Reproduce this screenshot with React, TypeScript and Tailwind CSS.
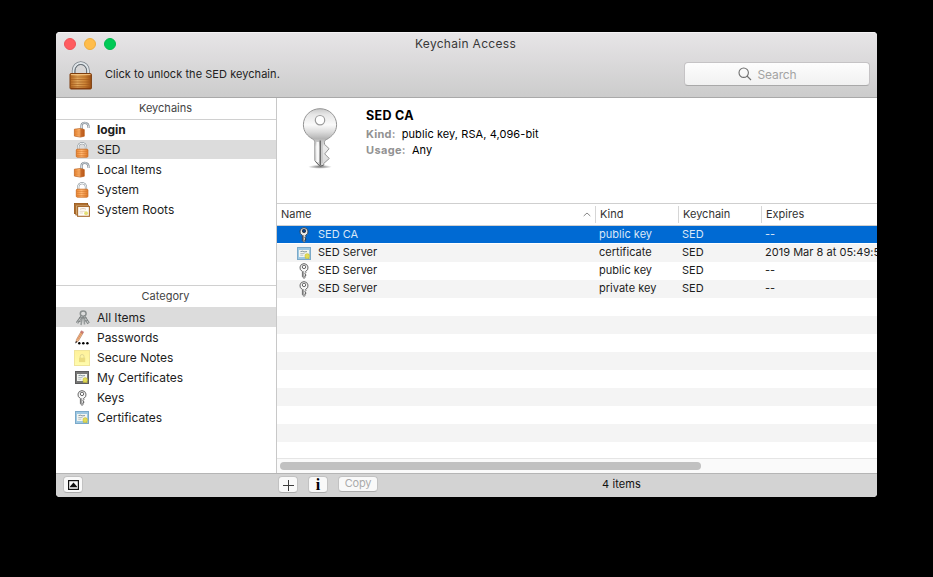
import React from "react";

function Defs() {
  return (
    <svg width="0" height="0" className="absolute">
      <defs>
        <linearGradient id="brass" x1="0" y1="0" x2="1" y2="0">
          <stop offset="0" stopColor="#b5661f" />
          <stop offset="0.35" stopColor="#dfa55a" />
          <stop offset="0.7" stopColor="#cd8435" />
          <stop offset="1" stopColor="#9a4d12" />
        </linearGradient>
        <linearGradient id="orange" x1="0" y1="0" x2="1" y2="0">
          <stop offset="0" stopColor="#ec8530" />
          <stop offset="0.45" stopColor="#ffb873" />
          <stop offset="1" stopColor="#de7726" />
        </linearGradient>
        <linearGradient id="steel" x1="0" y1="0" x2="0" y2="1">
          <stop offset="0" stopColor="#c9c9c9" />
          <stop offset="0.1" stopColor="#e6e6e6" />
          <stop offset="0.28" stopColor="#fafafa" />
          <stop offset="0.4" stopColor="#dcdcdc" />
          <stop offset="0.52" stopColor="#b4b4b4" />
          <stop offset="0.66" stopColor="#ececec" />
          <stop offset="1" stopColor="#d6d6d6" />
        </linearGradient>
        <radialGradient id="shade">
          <stop offset="0" stopColor="#000" stopOpacity="0.55" />
          <stop offset="1" stopColor="#000" stopOpacity="0" />
        </radialGradient>
        <linearGradient id="note" x1="0" y1="0" x2="0" y2="1">
          <stop offset="0" stopColor="#fff19a" />
          <stop offset="1" stopColor="#fffcae" />
        </linearGradient>
      </defs>
    </svg>
  );
}

function BigLock() {
  return (
    <svg width="24" height="29" viewBox="0 0 24 29" className="block">
      <path d="M4.6 13V9.6a7.2 7.6 0 0 1 14.4 0V13" fill="none" stroke="#7d858c" strokeWidth="3.6" />
      <path d="M4.6 13V9.6a7.2 7.6 0 0 1 14.4 0V13" fill="none" stroke="#dfe5e9" strokeWidth="2" />
      <path d="M5.9 13V9.8a5.9 6.3 0 0 1 11.8 0V13" fill="none" stroke="#59636b" strokeWidth="0.8" />
      <rect x="1" y="12.5" width="21.4" height="15.5" rx="1" fill="url(#brass)" stroke="#7d3d0e" />
      <path d="M2 13.6h19.5" stroke="#f3c483" />
      <path d="M2 16h19.5M2 18.5h19.5M2 21h19.5M2 23.5h19.5M2 25.6h19.5" stroke="#a0581c" strokeWidth="0.8" opacity="0.75" />
      <path d="M2 27.3h19.5" stroke="#7d3509" />
    </svg>
  );
}

function Lock() {
  return (
    <svg width="16" height="16" viewBox="0 0 16 16" className="block">
      <path d="M4.2 8V5.2a3.9 4 0 0 1 7.8 0V8" fill="none" stroke="#8c959b" strokeWidth="2.2" />
      <path d="M4.2 8V5.2a3.9 4 0 0 1 7.8 0V8" fill="none" stroke="#f4f7f8" strokeWidth="1.1" />
      <rect x="2.3" y="7.2" width="11.6" height="8" rx="1" fill="url(#orange)" stroke="#c9681c" strokeWidth="0.8" />
      <path d="M3 9.5h10M3 11.5h10M3 13.5h10" stroke="#d4752a" strokeWidth="0.7" opacity="0.7" />
    </svg>
  );
}

function OpenLock() {
  return (
    <svg width="16" height="16" viewBox="0 0 16 16" className="block overflow-visible">
      <path d="M8.1 8.3C6.6 3.4 7.6 0.8 10.8 0.8c2.4 0 4 1.6 3.7 5" fill="none" stroke="#818b93" strokeWidth="2.3" />
      <path d="M8.1 8.3C6.6 3.4 7.6 0.8 10.8 0.8c2.4 0 4 1.6 3.7 5" fill="none" stroke="#dfe5e9" strokeWidth="1" />
      <path d="M0.4 7.2 6.4 6.5 10.3 7.6v6.6l-3.9 0.9-6-1z" fill="url(#orange)" stroke="#b75c18" strokeWidth="0.7" />
      <path d="m6.4 6.9 3.6 0.9v6.2l-3.6 0.9z" fill="#a8480f" opacity="0.6" />
      <path d="m1 9.2 5.3-0.2M1 11h5.3M1 12.7l5.3 0.3" stroke="#d4752a" strokeWidth="0.6" />
    </svg>
  );
}

function Cert({ frame, inner }: { frame: string; inner: string }) {
  return (
    <svg width="14" height="13" viewBox="0 0 14 13" className="block">
      <rect width="14" height="13" fill={frame} />
      <rect x="0.5" y="0.5" width="13" height="12" fill="none" stroke={inner} />
      <rect x="2" y="3" width="10" height="7" fill="#f3f5f0" />
      <path d="M3.5 4.6 5.8 4.2l1.2 0.7 3-0.3" stroke="#697c86" strokeWidth="0.8" fill="none" />
      <path d="M3.3 6.5h4.2M3.3 8.2h3" stroke="#a0aab0" strokeWidth="0.7" />
      <path d="m8.8 9-1 2.8 2.4-0.6 2.2 1-0.6-3.4z" fill="#cfc534" />
      <circle cx="10.2" cy="9" r="2.4" fill="#e3dc55" stroke="#b8ae34" strokeWidth="0.4" />
    </svg>
  );
}

function Roots() {
  return (
    <svg width="16" height="14" viewBox="0 0 16 14" className="block">
      <rect x="0.5" y="0.5" width="13" height="10" fill="#c88d48" stroke="#95581e" />
      <path d="M1 11V1h12" fill="none" stroke="#b37130" />
      <rect x="1.8" y="2" width="12.8" height="10" fill="#dfb377" stroke="#925820" strokeWidth="0.7" />
      <rect x="3.6" y="3.5" width="11.8" height="9.8" fill="#fffefa" stroke="#a76a2e" strokeWidth="1.1" />
      <path d="M6 6.2c2-0.8 4-0.8 6 0" stroke="#d2b8a0" strokeWidth="0.8" fill="none" />
      <path d="M5.5 8.3h6M5.5 10h3.5" stroke="#e1ccb8" strokeWidth="0.7" />
      <circle cx="12.1" cy="10.2" r="1.9" fill="#e5df75" />
    </svg>
  );
}

function SmallKey({ light = false }: { light?: boolean }) {
  return (
    <svg width="10" height="16" viewBox="0 0 10 16" className="block">
      <path
        d="M5 0.6A4.3 4.1 0 0 0 3.4 8.4v5.4l1.6 1.6 1.4-1.2-0.7-1.2 1.5-0.9-1.4-1.3 1.1-1.1-0.3-1.3A4.3 4.1 0 0 0 5 0.6z"
        fill={light ? "#e9e9e5" : "#f7f7f7"}
        stroke={light ? "#2c3a4c" : "#606060"}
        strokeWidth="0.95"
      />
      <circle cx="5" cy="3.9" r="1.7" fill={light ? "#0b3f83" : "#fff"} stroke={light ? "#28313d" : "#555"} strokeWidth="0.9" />
      <path d="M4.7 8.2v6" stroke={light ? "#555" : "#777"} strokeWidth="0.8" />
    </svg>
  );
}

function BigKey() {
  return (
    <svg width="36" height="62" viewBox="0 0 36 62" className="block">
      <ellipse cx="18" cy="58.8" rx="12" ry="2" fill="url(#shade)" />
      <path
        d="M18 0.7C8.7 0.7 1.4 7.8 1.4 16.8c0 6.8 4 11.3 9.2 14.2 1.6 0.9 2.2 2 2.2 3.7v18l5.3 5.8 3.8-1.4-0.2-1.6 5.6-5-4.6-4.6 4.4-5.2-4.6-4.4V34.4c0-1.6 0.6-2.3 2.2-3 5.4-2.9 9.9-7.8 9.9-14.6C34.6 7.8 27.3 0.7 18 0.7z"
        fill="url(#steel)"
        stroke="#949494"
        strokeWidth="1"
      />
      <circle cx="18" cy="12.2" r="4.7" fill="#fff" stroke="#9b9b9b" strokeWidth="1.2" />
      <path d="M18.3 32.5v25" stroke="#6b6b6b" strokeWidth="1.5" />
      <path d="M20 33v22" stroke="#c4c4c4" strokeWidth="1.5" />
      <path d="M15.7 34v20" stroke="#fafafa" strokeWidth="2.4" />
      <path d="m13.5 53.5 4.6 4.8 3.3-1.1" fill="none" stroke="#666" />
    </svg>
  );
}

function KeyBunch() {
  return (
    <svg width="15" height="16" viewBox="0 0 15 16" className="block">
      <ellipse cx="8.2" cy="3.6" rx="2.9" ry="2.6" fill="none" stroke="#8a8f8f" strokeWidth="1.5" />
      <path d="M7 6 2 13M8.6 6l5 7.4" stroke="#808585" strokeWidth="2.8" />
      <path d="M7 6.2 2.4 12.8M9 6.6l4.2 6.2" stroke="#c9cdcd" strokeWidth="1.1" />
      <path d="M7.4 6.5 6 15M9 7.5l0.5 7" stroke="#969b9b" strokeWidth="1.6" />
      <path d="M4 7.9h7.8M3 11.3h2.7M10.5 11.2l2.5-1" stroke="#777c7c" strokeWidth="0.9" />
    </svg>
  );
}

function Pencil() {
  return (
    <svg width="16" height="16" viewBox="0 0 16 16" className="block">
      <path d="m2 12.3 0.4-2.7L6.6 2.3l2.3 1.1-4.5 7.5z" fill="#f5c692" stroke="#ad6f52" strokeWidth="0.6" />
      <path d="m6.6 2.2 0.8-1.4 2.2 1.1-0.7 1.4z" fill="#dd8580" stroke="#a85854" strokeWidth="0.5" />
      <path d="m3.5 9.7 4.3-7" stroke="#d97445" strokeWidth="0.7" />
      <path d="m1.1 13.4 0.9-2.4 1.4 0.9z" fill="#222" />
      <circle cx="5.3" cy="13.3" r="1.2" />
      <circle cx="9.3" cy="13.3" r="1.25" />
      <circle cx="13.4" cy="13.3" r="1.25" />
    </svg>
  );
}

function Note() {
  return (
    <svg width="16" height="16" viewBox="0 0 16 16" className="block">
      <rect x="0.5" y="0.5" width="15" height="15" fill="url(#note)" stroke="#f0e49a" />
      <path d="M6.2 8V6.4a1.9 1.9 0 0 1 3.8 0V8" fill="none" stroke="#e0d795" strokeWidth="1" />
      <rect x="5" y="7.7" width="6.2" height="4.4" fill="#ebdc80" />
    </svg>
  );
}

function SideRow({ icon, label, selected, className = "" }: { icon: React.ReactNode; label: string; selected?: boolean; className?: string }) {
  return (
    <div className="h-5">
      <div className={`flex h-[19px] items-center pl-[17px] ${selected ? "bg-[#dcdcdc]" : ""}`}>
        <span className="flex h-4 w-[18px] shrink-0 items-center justify-center">{icon}</span>
        <span className={`ml-[6px] whitespace-nowrap text-[12px] leading-[19px] tracking-[-0.03px] text-[#1d1d1d] ${className}`}>{label}</span>
      </div>
    </div>
  );
}

const rows = [
  { icon: <SmallKey light />, name: "SED CA", kind: "public key", expires: "--" },
  { icon: <Cert frame="#9ec8e2" inner="#7aa9c9" />, name: "SED Server", kind: "certificate", expires: "2019 Mar 8 at 05:49:5" },
  { icon: <SmallKey />, name: "SED Server", kind: "public key", expires: "--" },
  { icon: <SmallKey />, name: "SED Server", kind: "private key", expires: "--" },
];

const button = "flex items-center justify-center rounded-[4px] border border-[#c2c2c2] border-b-[#acacac] bg-[#f9f9f9]";

export default function App() {
  return (
    <div className="h-[577px] w-[933px] overflow-hidden bg-black pl-[56px] pt-8 font-['Inter','Liberation_Sans',sans-serif]">
      <Defs />
      <div className="flex h-[465px] w-[821px] flex-col overflow-hidden rounded-t-[4px] rounded-b-[4px] bg-white">
        <header className="h-[66px] shrink-0 border-b border-[#a9a9a9] border-t border-t-[#f4f2f4] bg-gradient-to-b from-[#e7e5e7] to-[#cccccc]">
          <div className="grid h-[21px] grid-cols-[1fr_auto_1fr] items-center">
            <div className="flex gap-2 pl-2">
              <span className="size-3 rounded-full border border-[#ee5257] bg-[#ff5c60]" />
              <span className="size-3 rounded-full border border-[#eeac3d] bg-[#ffbd4c]" />
              <span className="size-3 rounded-full border border-[#00b94e] bg-[#00ca56]" />
            </div>
            <h1 className="pr-[2px] text-[12px] leading-[21px] tracking-[0.3px] text-[#383838]">Keychain Access</h1>
          </div>
          <div className="flex items-start">
            <div className="ml-[13px] mt-[7px]"><BigLock /></div>
            <span className="ml-3 mt-[12px] text-[11px] leading-4 tracking-[0.05px] text-[#222]">Click to unlock the SED keychain.</span>
            <div className="ml-auto mr-[7px] mt-[8px] flex h-6 w-[186px] items-center justify-center rounded-[4px] border border-[#c5c3c5] border-b-[#a9a9a9] bg-gradient-to-b from-[#fdfdfd] to-[#f1f1f1] pr-[19px]">
              <svg width="14" height="14" viewBox="0 0 14 14" fill="none" stroke="#707070" strokeWidth="1.1"><circle cx="5.7" cy="5.7" r="4.7" /><path d="m9 9 4 4" /></svg>
              <span className="ml-[5px] pt-px text-[12px] leading-[22px] tracking-[-0.1px] text-[#a3a3a3]">Search</span>
            </div>
          </div>
        </header>

        <div className="flex h-[375px] shrink-0">
          <aside className="w-[221px] shrink-0 border-r border-[#c8c8c8]">
            <div className="h-[22px] border-b border-[#d0d0d0] pr-px text-center text-[11px] leading-[21px] text-[#444]">Keychains</div>
            <div className="h-[165px]">
              <SideRow icon={<OpenLock />} label="login" className="font-bold" />
              <SideRow icon={<Lock />} label="SED" selected />
              <SideRow icon={<OpenLock />} label="Local Items" />
              <SideRow icon={<Lock />} label="System" />
              <SideRow icon={<Roots />} label="System Roots" />
            </div>
            <div className="h-[22px] border-t border-[#d0d0d0] pr-px text-center text-[11px] leading-[21px] text-[#444]">Category</div>
            <div className="mb-[-19px] h-5 bg-[#dcdcdc]" />
            <div className="relative">
              <SideRow icon={<KeyBunch />} label="All Items" />
              <SideRow icon={<Pencil />} label="Passwords" />
              <SideRow icon={<Note />} label="Secure Notes" />
              <SideRow icon={<Cert frame="#777777" inner="#5c5c5c" />} label="My Certificates" />
              <SideRow icon={<SmallKey />} label="Keys" />
              <SideRow icon={<Cert frame="#9ec8e2" inner="#7aa9c9" />} label="Certificates" />
            </div>
          </aside>

          <main className="w-[600px] overflow-hidden">
            <section className="flex h-[106px] border-b border-[#cfcfcf] pl-[25px] pt-[10px]">
              <BigKey />
              <div className="ml-7 -mt-px text-[11px] leading-[17px] tracking-[0.08px] text-black">
                <h2 className="text-[12.5px] font-bold leading-[17px] tracking-[0.3px]">SED CA</h2>
                <p className="mt-[2px]"><b className="mr-1.5 font-bold tracking-[0.25px] text-[#929292]">Kind:</b>public key, RSA, 4,096-bit</p>
                <p className="-mt-px"><b className="mr-1.5 font-bold tracking-[0.35px] text-[#929292]">Usage:</b>Any</p>
              </div>
            </section>
            <div className="flex h-[22px] items-center border-b border-[#d0d0d0] text-[11px] text-[#333]">
              <div className="flex w-[318px] items-center justify-between pl-1 pr-1">
                <span>Name</span>
                <svg width="8" height="5" viewBox="0 0 8 5" fill="none" stroke="#888"><path d="m0.7 4 3.3-3 3.3 3" /></svg>
              </div>
              <div className="h-[17px] w-[83px] border-l border-[#d6d6d6] pl-1 leading-[17px]">Kind</div>
              <div className="h-[17px] w-[83px] border-l border-[#d6d6d6] pl-1 leading-[17px]">Keychain</div>
              <div className="h-[17px] border-l border-[#d6d6d6] pl-1 leading-[17px]">Expires</div>
            </div>
            <div className="h-[232px] overflow-hidden text-[11px] leading-[17px] tracking-[0.02px] text-[#1c1c1c]">
              {Array.from({ length: 13 }, (_, i) => {
                const row = rows[i];
                return (
                  <div key={i} className="h-[18px]">
                    <div className={`flex whitespace-nowrap ${i === 0 ? "h-[17px] bg-[#006ad3] text-[#d9e7f7]" : i % 2 ? "h-[18px] bg-[#f4f4f4]" : "h-[18px]"}`}>
                      {row && (
                        <>
                          <span className="flex w-[41px] shrink-0 items-center justify-center pl-[13px]">{row.icon}</span>
                          <span className="w-[281px] shrink-0">{row.name}</span>
                          <span className="w-[83px] shrink-0">{row.kind}</span>
                          <span className="w-[83px] shrink-0">SED</span>
                          <span className="w-[112px] overflow-hidden">{row.expires}</span>
                        </>
                      )}
                    </div>
                  </div>
                );
              })}
            </div>
            <div className="h-[15px] border-t border-[#e5e5e5] bg-[#fafafa] pl-[3px] pt-[3px]">
              <div className="h-2 w-[421px] rounded-full bg-[#c1c1c1]" />
            </div>
          </main>
        </div>

        <footer className="flex h-6 items-start border-t border-[#b5b5b5] bg-[#d3d3d3] pt-[2px]">
          <div className={`ml-[7px] h-[17px] w-5 ${button}`}>
            <svg width="11" height="10" viewBox="0 0 11 10"><rect x="0.6" y="0.6" width="9.8" height="8.8" fill="none" stroke="#111" strokeWidth="1.2" /><path d="M5.5 2.4 9 6.5v0.7H2v-0.7z" fill="#111" /></svg>
          </div>
          <div className={`ml-[195px] h-[17px] w-5 ${button}`}>
            <svg width="11" height="11" viewBox="0 0 11 11" className="translate-y-px" stroke="#3c3c3c"><path d="M5.5 0v11M0 5.5h11" /></svg>
          </div>
          <div className={`ml-[10px] h-[17px] w-5 pt-px font-['Liberation_Serif',serif] text-[16px] font-bold leading-none ${button}`}>i</div>
          <div className={`ml-[10px] h-4 w-10 pb-px text-[11px] leading-none tracking-[-0.15px] text-[#aaa] ${button}`}>Copy</div>
          <span className="ml-[224px] text-[11px] leading-[17px] tracking-[0.12px] text-[#111]">4 items</span>
        </footer>
      </div>
    </div>
  );
}
